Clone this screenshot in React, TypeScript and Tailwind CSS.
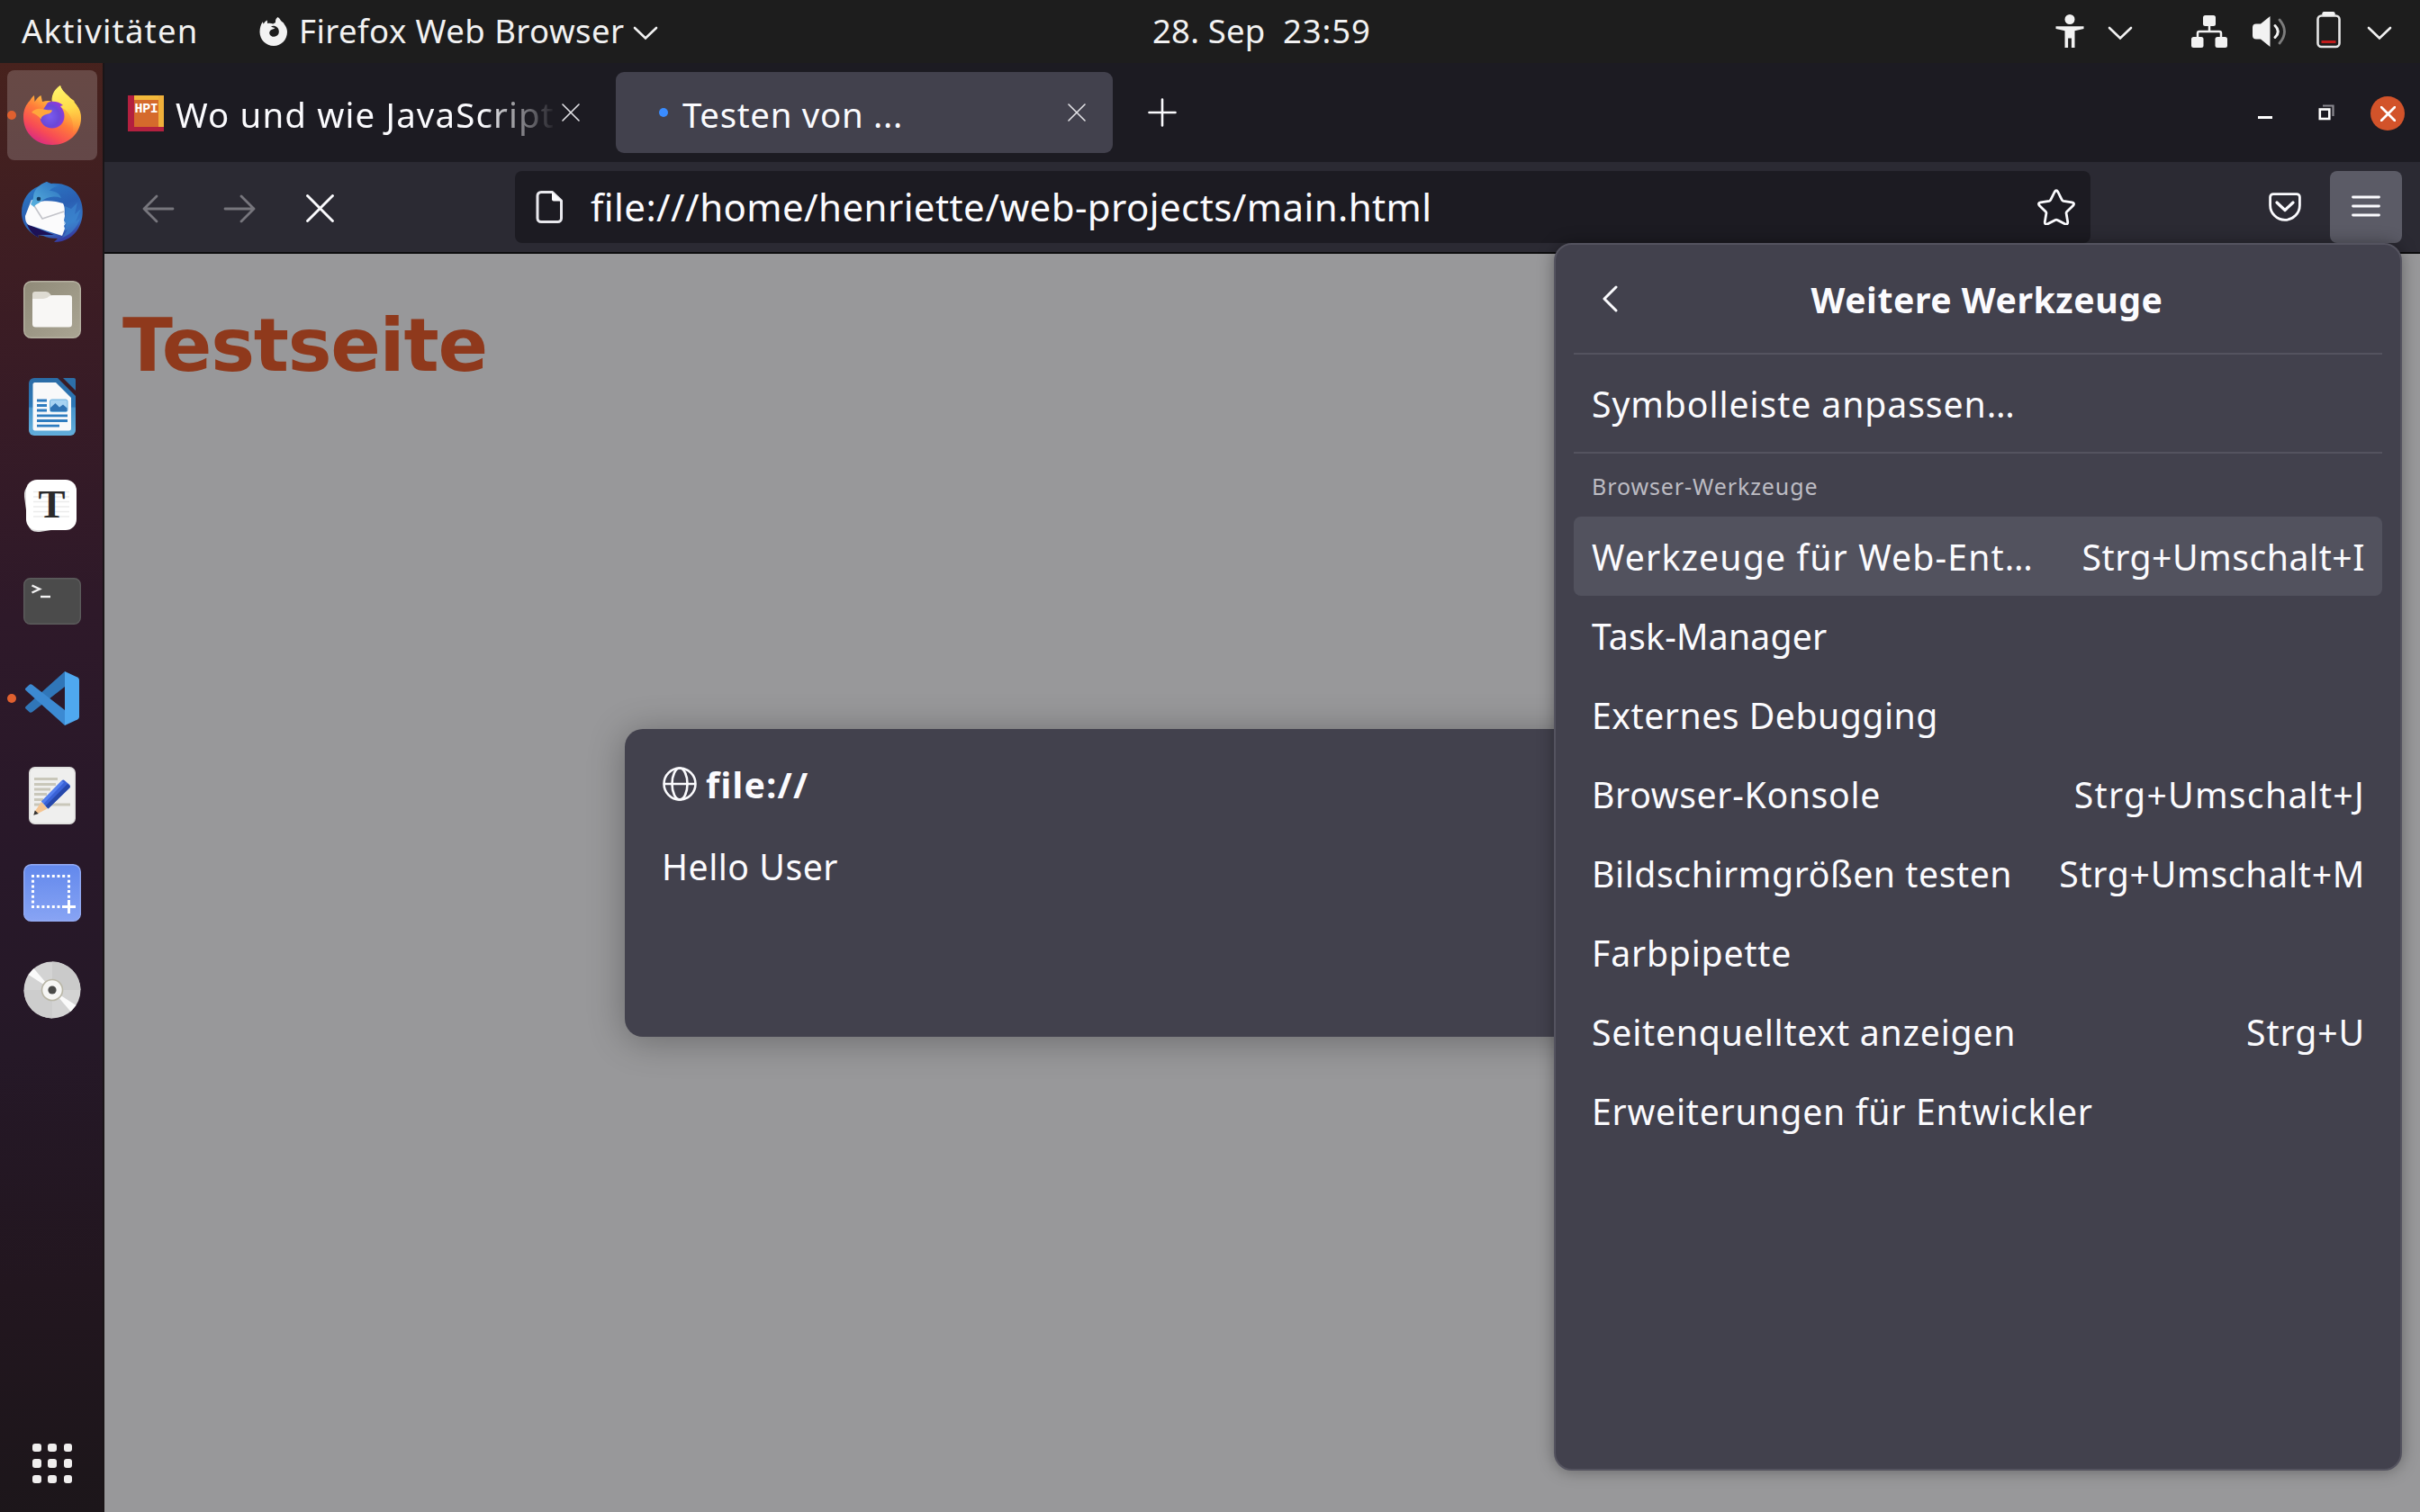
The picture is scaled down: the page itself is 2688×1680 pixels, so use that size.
import React from "react";

type SvgProps = { className?: string };

const Chevron = ({ className = "" }: SvgProps) => (
  <svg viewBox="0 0 28 16" className={`h-4 w-7 shrink-0 ${className}`} fill="none" stroke="#f2f2f2" strokeWidth="2.6" strokeLinecap="round">
    <path d="M2 2l12 11.5L26 2" />
  </svg>
);

const Cross = ({ className = "", w = 1.6, color = "#e4e4e8" }: { className?: string; w?: number; color?: string }) => (
  <svg viewBox="0 0 20 20" className={`shrink-0 ${className}`} fill="none" stroke={color} strokeWidth={w} strokeLinecap="round">
    <path d="M1 1l18 18M19 1L1 19" />
  </svg>
);

const FirefoxSymbolic = () => (
  <svg viewBox="0 0 32 32" className="h-8 w-8 shrink-0" fill="#f2f2f2">
    <path
      fillRule="evenodd"
      d="M20.5 0c3 2 3.300 4.500 5.300 5.500 .9 .5 1.600 1.400 2 2.500 2 2.400 3.200 5.400 3.200 8.500C31 25 24.500 32 16 32S.5 25 .5 16.500C.5 12 1.800 8 3.800 5.200l.9 2.600C5.500 6 7 4.600 8.800 3.600L9 7c2-.6 4.500-.3 6.300.5L18 6c-.3-2.500.5-4.600 2.500-6zM13 10.500c1.300 1 3.200 1.200 4.500 1.600-1.500 1.700-3.800 1.400-4.800 2.500-1.200 1.400-1.900 2.700-1.200 4.400 .9 2 3 3 5 2.800 3.600-.3 5.500-3 5.300-6-.1-2-.8-3.300-1.900-4.300-1.600-1.600-4.900-2.200-6.900-1z"
    />
  </svg>
);

const Accessibility = () => (
  <svg viewBox="0 0 34 40" className="h-10 w-[34px] shrink-0" fill="#f2f2f2">
    <circle cx="17" cy="6.500" r="5.500" />
    <path d="M1.500 14.300h31v2.600l-10 2.300V38h-3.600V27.500h-3.800V38h-3.600V19.200l-10-2.300z" />
  </svg>
);

const Network = () => (
  <svg viewBox="0 0 40 36" className="h-9 w-10 shrink-0" fill="#f2f2f2">
    <rect x="13" y="0" width="14" height="12" rx="2.500" />
    <rect x="0" y="24" width="13.500" height="12" rx="2.500" />
    <rect x="26.500" y="24" width="13.500" height="12" rx="2.500" />
    <path d="M20 11v7M7 25v-5a2 2 0 012-2h22a2 2 0 012 2v5" fill="none" stroke="#f2f2f2" strokeWidth="2.500" />
  </svg>
);

const Volume = () => (
  <svg viewBox="0 0 38 36" className="h-9 w-[38px] shrink-0" fill="none" strokeLinecap="round">
    <path d="M0 13.500Q0 9.500 4 9.500H9L19.500 1V35L9 26.500H4Q0 26.500 0 22.500z" fill="#f2f2f2" />
    <path d="M25 11.500q6.500 6.500 0 13" stroke="#f2f2f2" strokeWidth="3" />
    <path d="M30 5q11 13 0 26" stroke="#7d7d7d" strokeWidth="2.800" />
  </svg>
);

const Battery = () => (
  <svg viewBox="0 0 27 41" className="h-[41px] w-[27px] shrink-0" fill="none">
    <rect x="1.500" y="4.500" width="24" height="34.500" rx="4" stroke="#e6e6e6" strokeWidth="2.600" />
    <path d="M8.500 2.200h10" stroke="#f2f2f2" strokeWidth="4.400" strokeLinecap="round" />
    <path d="M5.500 33.500h16" stroke="#c01c1c" strokeWidth="3" />
  </svg>
);

const FirefoxLogo = () => (
  <svg viewBox="0 0 64 66" className="h-[66px] w-16">
    <defs>
      <linearGradient id="fxBody" x1="0.85" y1="0.05" x2="0.3" y2="1">
        <stop offset="0" stopColor="#fff05a" />
        <stop offset="0.3" stopColor="#ffc53c" />
        <stop offset="0.55" stopColor="#ff7b3a" />
        <stop offset="0.8" stopColor="#f74b55" />
        <stop offset="1" stopColor="#d82a83" />
      </linearGradient>
      <linearGradient id="fxFlame" x1="0.4" y1="0" x2="0.6" y2="1">
        <stop offset="0" stopColor="#fff36a" />
        <stop offset="0.5" stopColor="#ffdc4a" />
        <stop offset="1" stopColor="#ff9a3c" stopOpacity="0.2" />
      </linearGradient>
      <radialGradient id="fxGlobe" cx="0.4" cy="0.55" r="0.65">
        <stop offset="0" stopColor="#7a5cf0" />
        <stop offset="0.6" stopColor="#6a48d8" />
        <stop offset="1" stopColor="#9a37d8" />
      </radialGradient>
    </defs>
    <path
      d="M41 0c1.500 6 7 9.500 11 14l3 2c1 .3 2 1.500 1.600 3 4.600 5 7.400 9 7.400 17 0 17-14 30-32 30S0 53 0 35c0-8 3-14 7-18l2-3c1-1.500 2-2.500 3-3l.5 7c2.500-3.500 4-5.500 7-7l1.500 7c4-1 8-1.500 11 0 0-8 3-14 9-18z"
      fill="url(#fxBody)"
    />
    <path d="M41 0c1.500 6 7 9.500 11 14 8 7 11 14 12 22-1 8-5 14-9 17 2-12-3-24-12-28-5-2-9-4-11.500-8C31.500 9 35 4 41 0z" fill="url(#fxFlame)" />
    <path d="M27 19c5-2.500 13-1 17 3l-3 1c3 3 4.500 7 4.500 11 0 8-6 13.500-13.500 13.500S18.500 42 18.500 35c0-3 1-5 2-6z" fill="url(#fxGlobe)" />
    <path d="M9 30c4-5 9-5 14-3.500 3 .8 6 .8 9 1-1 4-5 4-8 5-3 1.200-4 2.500-4.500 5-2-3-6-6-10.500-7.500z" fill="#ffa63c" />
  </svg>
);

const Thunderbird = () => (
  <svg viewBox="0 0 68 68" className="h-[68px] w-[68px]">
    <defs>
      <linearGradient id="tbBody" x1="0.3" y1="0" x2="0.7" y2="1">
        <stop offset="0" stopColor="#2c79c4" />
        <stop offset="0.45" stopColor="#2a5fb3" />
        <stop offset="0.75" stopColor="#3474c4" />
        <stop offset="1" stopColor="#35309a" />
      </linearGradient>
      <linearGradient id="tbHead" x1="0" y1="1" x2="1" y2="0">
        <stop offset="0" stopColor="#5ab4e0" />
        <stop offset="1" stopColor="#2a6fbe" />
      </linearGradient>
    </defs>
    <path
      d="M28 0l5 2C46 1 57 6 62 14c6 8 7 20 4.500 29C63 56 53 67 36 67l4-4c-7 0-12-1-16-3l-6-1 1 3C9 57 0 48 0 34 0 20 8 9 19 5z"
      fill="url(#tbBody)"
    />
    <path d="M6 47l30 12-18 0 1 3C12 59 8 53 6 47z" fill="#1d1257" />
    <path d="M4 38L11 20l5 3c9-3 22-2 30 1 3 6 1 9 2 14l-1 5 2 3-2 3 1 3-3 8L8 48c-3-2-4-5-4-10z" fill="#fbfbfc" />
    <path d="M11 22l12 19 24-8" fill="none" stroke="#c3c4ca" strokeWidth="1.600" />
    <path d="M28 0c-9 3-15 9-15 18l-3 7 4 3c1-3 3-3 6-5 7-6 15-8 24-5-2-6-8-8-13-8 2-3 6-5 10-5-3-2-8-3-11-3z" fill="url(#tbHead)" />
    <circle cx="19" cy="19" r="2.300" fill="#123a5e" />
    <path d="M48 27c2 8 0 14-1 20l3-1-3 9 4-2-6 9c10-3 17-12 20-21l-5 3 6-14-7 6 3-13-7 7z" fill="#3f8fd6" opacity="0.5" />
  </svg>
);

const Files = () => (
  <svg viewBox="0 0 64 64" className="h-16 w-16">
    <defs>
      <linearGradient id="fl" x1="0" y1="0" x2="1" y2="1">
        <stop offset="0" stopColor="#8f8a78" />
        <stop offset="1" stopColor="#aaa593" />
      </linearGradient>
    </defs>
    <rect x="0.700" y="0.700" width="62.600" height="62.600" rx="8" fill="url(#fl)" stroke="#b5b1a1" strokeWidth="1.400" />
    <path d="M10 15a3 3 0 013-3h12q3 0 5 3l2 3v8H10z" fill="#dedbd2" />
    <path d="M10 20h12q4 0 7-3 1.500-1 3-1h19a3 3 0 013 3v29a3.500 3.500 0 01-3.500 3.500h-37A3.500 3.500 0 0110 48z" fill="#f8f7f5" />
  </svg>
);

const Writer = () => (
  <svg viewBox="0 0 52 64" className="h-16 w-[52px]">
    <defs>
      <linearGradient id="wr" x1="0" y1="0" x2="0" y2="1">
        <stop offset="0" stopColor="#2a6ca6" />
        <stop offset="0.5" stopColor="#2d79b8" />
        <stop offset="0.520" stopColor="#4795cc" />
        <stop offset="1" stopColor="#62aedb" />
      </linearGradient>
    </defs>
    <path d="M6 0h26l20 20v38a6 6 0 01-6 6H6a6 6 0 01-6-6V6a6 6 0 016-6z" fill="url(#wr)" />
    <path d="M38 0h12a2 2 0 012 2v12z" fill="#2d6fa8" />
    <path d="M6 5h24l17 17v34a2.500 2.500 0 01-2.500 2.500h-38A2.500 2.500 0 014.500 56V6.500z" fill="#f8f9fa" />
    <path d="M9 25h11M9 30.500h11M9 36h11M9 41.800h34M9 47.500h34M9 53.200h25" stroke="#2e7cbf" strokeWidth="2.800" />
    <rect x="23.500" y="24" width="19.500" height="13.500" rx="2" fill="#a7d3f2" stroke="#6fb2e0" />
    <path d="M24 37v-4l5.500-5 4.500 4.500 4-3 4.500 4V37z" fill="#2f73b3" />
  </svg>
);

const Typora = () => (
  <span className="relative mr-[4px] mt-[4px] h-[60px] w-[60px]">
    <svg viewBox="0 0 60 60" className="h-[60px] w-[60px]">
      <path d="M1 20Q0 12 6 7L14 2l36 52-32 5Q7 60 5 50z" fill="#dcdcdc" />
      <rect x="3" y="1" width="56" height="56" rx="12" fill="#fff" />
      <path d="M11 14.500h40M11 20h40M11 25.500h40M11 31h40M11 36.500h40M11 42h40" stroke="#ececec" strokeWidth="1.400" />
    </svg>
    <span className="absolute inset-0 flex items-center justify-center pb-[3px] pl-[3px] font-['Liberation_Serif',serif] text-[45px] leading-none font-bold text-[#2b2b2b]">
      T
    </span>
  </span>
);

const TerminalIcon = () => (
  <svg viewBox="0 0 64 52" className="h-[52px] w-16">
    <rect x="0.700" y="0.700" width="62.600" height="50.600" rx="7" fill="#4b4b4b" stroke="#5c5c5c" strokeWidth="1.400" />
    <path d="M9.500 8.500l8.500 4-8.500 4" fill="none" stroke="#f2f2f2" strokeWidth="2.400" />
    <path d="M19 21h11" stroke="#f2f2f2" strokeWidth="2.400" />
  </svg>
);

const VSCode = () => (
  <svg viewBox="0 0 60 60" className="h-[60px] w-[60px]">
    <path d="M5 45.500L.6 41.600q-1.200-1.200 0-2.600L44 0v17L8 45q-1.500 1.200-3 .5z" fill="#3076b8" />
    <path d="M5 14.500L.6 18.400q-1.200 1.200 0 2.600L44 60V43L8 15q-1.500-1.200-3-.5z" fill="#3c8ad2" />
    <path d="M44 0l14 6.500q2 1 2 3v41q0 2-2 3L44 60z" fill="#4fa8ef" />
  </svg>
);

const Editor = () => (
  <svg viewBox="0 0 52 64" className="h-16 w-[52px]">
    <rect x="0.700" y="0.700" width="50.600" height="62.600" rx="6" fill="#efefee" stroke="#dcdcda" strokeWidth="1.400" />
    <path d="M6 13.500h26M6 19.500h24M6 25h18M6 30.500h14M6 36.500h10M6 42h40" stroke="#c9c7ba" strokeWidth="2.900" />
    <path d="M14 39l6.500 7.500L9 52.500l-3.500.8 1-3.500z" fill="#f5c592" />
    <path d="M6.800 48.500l4 3.500-5.500 1.800z" fill="#333" />
    <path d="M14 38.500L36.500 15.500q1.800-1.800 3.600 0l5.200 4.500q1.500 1.500 0 3.200L21.500 46.500z" fill="#3a62d6" />
    <path d="M14 38.500L36.500 15.500l2.500 2L16.500 41z" fill="#5580ee" />
    <path d="M18.500 43.500L43 19l2.300 2q1.300 1.500 0 2.600L21.500 46.500z" fill="#2648ab" />
  </svg>
);

const Screenshot = () => (
  <svg viewBox="0 0 64 64" className="h-16 w-16">
    <defs>
      <linearGradient id="ss" x1="0" y1="0" x2="0" y2="1">
        <stop offset="0" stopColor="#6288ec" />
        <stop offset="1" stopColor="#88a4f4" />
      </linearGradient>
    </defs>
    <rect x="0.700" y="0.700" width="62.600" height="62.600" rx="8" fill="url(#ss)" stroke="#93aaf2" strokeWidth="1.400" />
    <path d="M9 13.500h44M9 47.500h33" stroke="#fff" strokeWidth="3" strokeDasharray="3 2.700" />
    <path d="M10.500 17.700v30M50.500 17.700v20" stroke="#fff" strokeWidth="3" strokeDasharray="3 2.700" />
    <path d="M50.500 40v15M43 47.500h15" stroke="#fff" strokeWidth="3" />
  </svg>
);

const Disc = () => (
  <svg viewBox="0 0 64 64" className="h-16 w-16">
    <circle cx="32" cy="32" r="31.500" fill="#d3d3d3" />
    <path d="M32 32L32 .5A31.500 31.500 0 0163.500 32z" fill="#cacaca" />
    <path d="M32 32L32 63.500A31.500 31.500 0 01.5 32z" fill="#cdcdcd" />
    <path d="M32 32L5.500 15l6-7z M32 32l26.500 17-6 7z" fill="#fafafa" />
    <circle cx="32" cy="32" r="11.500" fill="#f6f6f4" stroke="#b9b6a6" strokeWidth="1.600" />
    <circle cx="32" cy="32" r="4.600" fill="#4a4a48" />
  </svg>
);

const dock: { name: string; Icon: React.FC; active?: boolean; dot?: boolean }[] = [
  { name: "Firefox", Icon: FirefoxLogo, active: true, dot: true },
  { name: "Thunderbird", Icon: Thunderbird },
  { name: "Files", Icon: Files },
  { name: "Writer", Icon: Writer },
  { name: "Typora", Icon: Typora },
  { name: "Terminal", Icon: TerminalIcon },
  { name: "Code", Icon: VSCode, dot: true },
  { name: "Editor", Icon: Editor },
  { name: "Screenshot", Icon: Screenshot },
  { name: "Disc", Icon: Disc },
];

function TopBar() {
  return (
    <header className="grid h-[70px] shrink-0 grid-cols-[1276px_auto_1fr] items-center bg-[#1d1d1d] text-[36.5px] leading-none text-[#f2f2f2]">
      <div className="flex items-center pl-6">
        <span className="w-[264px] pb-[2px] tracking-[1.2px]">Aktivitäten</span>
        <FirefoxSymbolic />
        <span className="ml-[12px] w-[371px] pb-[2px] tracking-[0.45px]">Firefox Web Browser</span>
        <Chevron className="mt-1" />
      </div>
      <div className="flex w-[250px] pb-[2px] pl-[4px]">
        <span className="w-[145px] tracking-[0.2px] whitespace-nowrap">28. Sep</span>
        <span className="tracking-[0.9px]">23:59</span>
      </div>
      <div className="flex items-center justify-end pr-[31px]">
        <Accessibility />
        <Chevron className="mt-1 ml-[25px]" />
        <span className="ml-[65px] flex"><Network /></span>
        <span className="ml-7 flex"><Volume /></span>
        <span className="mb-1 ml-[33px] flex"><Battery /></span>
        <Chevron className="mt-1 ml-[29px]" />
      </div>
    </header>
  );
}

function Dock() {
  return (
    <aside className="flex w-[116px] shrink-0 flex-col border-r-2 border-[#1a1517] bg-[linear-gradient(175deg,#47221d_0%,#3d1d23_14%,#371b26_24%,#2e1929_38%,#281829_55%,#251827_68%,#22161f_84%,#1c161a_100%)] pt-1">
      {dock.map(({ name, Icon, active, dot }) => (
        <div key={name} className="relative flex h-[108px] items-center justify-center pl-[2px]">
          <div
            className={
              active
                ? "flex h-[100px] w-[100px] items-center justify-center rounded-lg bg-white/18"
                : "flex h-[100px] w-[100px] items-center justify-center"
            }
          >
            <Icon />
          </div>
          {dot && <span className="absolute left-2 h-[10px] w-[10px] rounded-full bg-[#e0602f]" />}
        </div>
      ))}
      <div className="mt-auto mb-8 ml-9 grid w-11 grid-cols-3 gap-x-2 gap-y-2">
        {Array.from({ length: 9 }, (_, i) => (
          <span key={i} className="h-[9.500px] w-[9.500px] rounded-[3px] bg-[#f0eeee]" />
        ))}
      </div>
    </aside>
  );
}

function TabStrip() {
  return (
    <div className="flex h-[110px] shrink-0 items-center bg-[#1c1b22] pl-[6px] text-[38.400px] leading-none text-[#fbfbfe]">
      <div className="flex h-[90px] w-[552px] items-center pl-5">
        <span className="mt-[2px] flex h-10 w-10 shrink-0 items-start border-b-[5px] border-l-[7px] border-[#b3203f] bg-[linear-gradient(#f3b93b_0_5px,#d56a2c_5px)]">
          <span className="flex h-full w-full items-start justify-center border-r-[6px] border-[#f0b03a] pt-[8px] font-['Liberation_Mono',monospace] text-[15px] leading-none font-bold tracking-[-0.400px] text-white">
            HPI
          </span>
        </span>
        <span className="ml-[13px] w-[425px] overflow-hidden [mask-image:linear-gradient(to_right,#000_340px,transparent_424px)] pt-[3px] leading-[50px] tracking-[1.150px] whitespace-nowrap">
          Wo und wie JavaScript
        </span>
        <Cross className="ml-[4px] h-5 w-5" />
      </div>
      <div className="ml-[10px] flex h-[90px] w-[552px] items-center rounded-[9px] bg-[#42414d] pr-[30px] pl-12">
        <span className="h-[10px] w-[10px] rounded-full bg-[#3a8cff]" />
        <span className="ml-4 flex-1 pt-[4px] tracking-[0.700px]">Testen von ...</span>
        <Cross className="h-5 w-5" />
      </div>
      <svg viewBox="0 0 32 32" className="ml-[39px] h-8 w-8" fill="none" stroke="#fbfbfe" strokeWidth="2.600" strokeLinecap="round">
        <path d="M16 1.500v29M1.500 16h29" />
      </svg>
      <div className="mr-[17px] ml-auto flex items-center">
        <span className="mt-[11px] h-[3px] w-4 bg-white" />
        <svg viewBox="0 0 18 18" className="ml-[51px] h-[18px] w-[18px]" fill="none">
          <path d="M5 1.500h11.500V13" stroke="#8b8a90" strokeWidth="2.200" />
          <rect x="1.800" y="5.500" width="10.500" height="10.500" stroke="#fff" strokeWidth="2.600" />
        </svg>
        <span className="mt-[2px] ml-10 flex h-[38px] w-[38px] items-center justify-center rounded-full bg-[#d2532a]">
          <Cross className="h-[17px] w-[17px]" w={3.2} color="#fff" />
        </span>
      </div>
    </div>
  );
}

function NavBar() {
  return (
    <div className="flex h-[102px] shrink-0 items-center border-b-2 border-[#0c0c0d] bg-[#2b2a33] pl-[42px]">
      <svg viewBox="0 0 36 32" className="mt-[3px] h-8 w-9" fill="none" stroke="#77767d" strokeWidth="2.800" strokeLinecap="round" strokeLinejoin="round">
        <path d="M16 2L2 16l14 14M2 16h32" />
      </svg>
      <svg viewBox="0 0 36 32" className="mt-[3px] ml-[54px] h-8 w-9" fill="none" stroke="#77767d" strokeWidth="2.800" strokeLinecap="round" strokeLinejoin="round">
        <path d="M20 2l14 14-14 14M34 16H2" />
      </svg>
      <Cross className="mt-[3px] ml-14 h-[31px] w-[31px]" w={1.9} color="#fbfbfe" />
      <div className="ml-[201px] flex h-20 w-[1750px] items-center rounded-lg bg-[#1c1b22] pr-[17px] pl-[22px]">
        <svg viewBox="0 0 32 38" className="h-[38px] w-8" fill="none">
          <path d="M7 2.500h12.500L29.500 12v19.500a4 4 0 01-4 4H7a4 4 0 01-4-4v-25a4 4 0 014-4z" stroke="#e9e9ee" strokeWidth="3" strokeLinejoin="round" />
          <path d="M19 2v8.500a2 2 0 002 2H30z" fill="#fbfbfe" />
        </svg>
        <span className="ml-[30px] flex-1 pb-[1px] text-[42px] leading-none tracking-[0.400px] text-[#fbfbfe]">
          file:///home/henriette/web-projects/main.html
        </span>
        <svg viewBox="0 0 42 40" className="h-10 w-[42px]" fill="none" stroke="#fbfbfe" strokeWidth="2.800" strokeLinejoin="round">
          <path d="M19 3.500q2-3.500 4 0l4.300 8.700q.5 1 1.600 1.200l9.500 1.400q3.600.8 1.200 3.700l-6.900 6.700q-.8.800-.6 1.900l1.600 9.300q.3 3.800-3.200 2.400l-8.400-4.400q-1.100-.6-2.200 0l-8.400 4.400q-3.500 1.400-3.200-2.400l1.600-9.300q.2-1.100-.6-1.900L2.400 18.500q-2.400-2.900 1.200-3.700l9.500-1.400q1.100-.2 1.600-1.200z" />
        </svg>
      </div>
      <svg viewBox="0 0 36 32" className="ml-[198px] h-8 w-9" fill="none" stroke="#fbfbfe" strokeWidth="2.800" strokeLinecap="round" strokeLinejoin="round">
        <path d="M5 1.600h26a3.400 3.400 0 013.400 3.400v9a16.400 16.400 0 01-32.800 0V5A3.400 3.400 0 015 1.600z" />
        <path d="M9 11l9 8.500 9-8.500" strokeWidth="3.200" />
      </svg>
      <div className="ml-8 flex h-20 w-20 items-center justify-center rounded-lg bg-[#5b5b66] pb-[2px]">
        <svg viewBox="0 0 32 24" className="h-6 w-8" stroke="#fbfbfe" strokeWidth="2.800" strokeLinecap="round">
          <path d="M1.500 2h29M1.500 12h29M1.500 22h29" />
        </svg>
      </div>
    </div>
  );
}

function AlertDialog() {
  return (
    <section className="absolute top-[528px] left-[578px] flex h-[342px] w-[1416px] flex-col rounded-[20px] bg-[#42414d] pt-[35px] pl-[42px] text-[39.200px] leading-[50px] text-[#fbfbfe] shadow-[0_4px_40px_rgba(0,0,0,0.3)]">
      <div className="flex items-center">
        <svg viewBox="0 0 38 38" className="h-[38px] w-[38px]" fill="none" stroke="#fbfbfe" strokeWidth="2.600">
          <circle cx="19" cy="19" r="17.500" />
          <ellipse cx="19" cy="19" rx="8.500" ry="17.500" />
          <path d="M1.500 19h35" />
        </svg>
        <span className="ml-[10px] pt-[2px] font-bold tracking-[1.300px]">file://</span>
      </div>
      <p className="mt-[41px] -ml-px tracking-[0.500px]">Hello User</p>
    </section>
  );
}

type Item = { label: string; ls: string; keys?: string; kls?: string; hot?: boolean };

const items: Item[] = [
  { label: "Werkzeuge für Web-Ent…", ls: "tracking-[1.150px]", keys: "Strg+Umschalt+I", kls: "tracking-[0.500px]", hot: true },
  { label: "Task-Manager", ls: "tracking-[0.200px]" },
  { label: "Externes Debugging", ls: "tracking-[0.500px]" },
  { label: "Browser-Konsole", ls: "tracking-[0.650px]", keys: "Strg+Umschalt+J", kls: "tracking-[1.250px]" },
  { label: "Bildschirmgrößen testen", ls: "tracking-[0.550px]", keys: "Strg+Umschalt+M", kls: "tracking-[0.700px]" },
  { label: "Farbpipette", ls: "tracking-[0.800px]" },
  { label: "Seitenquelltext anzeigen", ls: "tracking-[0.780px]", keys: "Strg+U", kls: "tracking-[0.900px]" },
  { label: "Erweiterungen für Entwickler", ls: "tracking-[0.750px]" },
];

function ToolsMenu() {
  return (
    <nav className="absolute top-[270px] left-[1726px] flex h-[1364px] w-[942px] flex-col rounded-[20px] border-2 border-[#54535f] bg-[#42414d] px-5 text-[39.200px] leading-none text-[#fbfbfe] shadow-[0_0_18px_rgba(0,0,0,0.35)]">
      <div className="flex h-[120px] items-center">
        <svg viewBox="0 0 18 30" className="ml-[31px] h-[30px] w-[18px]" fill="none" stroke="#fbfbfe" strokeWidth="3" strokeLinecap="round" strokeLinejoin="round">
          <path d="M16 2L3 15l13 13" />
        </svg>
        <h2 className="flex-1 pt-[1px] pr-[29px] text-center font-bold tracking-[0.550px]">Weitere Werkzeuge</h2>
      </div>
      <div className="h-[2px] bg-[#54535f]" />
      <div className="my-[10px] flex h-[88px] items-center pt-[1px] pl-5 tracking-[0.900px]">Symbolleiste anpassen…</div>
      <div className="h-[2px] bg-[#54535f]" />
      <div className="flex h-[70px] items-center pt-[3px] pl-5 text-[25px] tracking-[0.900px] text-[#bdbcc3]">Browser-Werkzeuge</div>
      {items.map((it) => (
        <div
          key={it.label}
          className={
            it.hot
              ? "flex h-[88px] items-center justify-between rounded-lg bg-[#52525e] pt-[2px] pr-[19px] pl-5"
              : "flex h-[88px] items-center justify-between pt-[2px] pr-[19px] pl-5"
          }
        >
          <span className={it.ls}>{it.label}</span>
          {it.keys && <span className={it.kls}>{it.keys}</span>}
        </div>
      ))}
    </nav>
  );
}

export default function App() {
  return (
    <div className="relative flex h-[1680px] w-[2688px] flex-col overflow-hidden bg-[#1d1d1d] font-['Noto_Sans',sans-serif]">
      <TopBar />
      <div className="flex min-h-0 flex-1">
        <Dock />
        <div className="flex min-w-0 flex-1 flex-col">
          <TabStrip />
          <NavBar />
          <main className="relative flex-1 overflow-hidden bg-[#98989a] pt-[54px] pl-5">
            <h1 className="font-['DejaVu_Sans',sans-serif] text-[82px] leading-[96px] font-bold tracking-[-1.250px] text-[#8f391c]">Testseite</h1>
            <AlertDialog />
          </main>
        </div>
      </div>
      <ToolsMenu />
    </div>
  );
}
